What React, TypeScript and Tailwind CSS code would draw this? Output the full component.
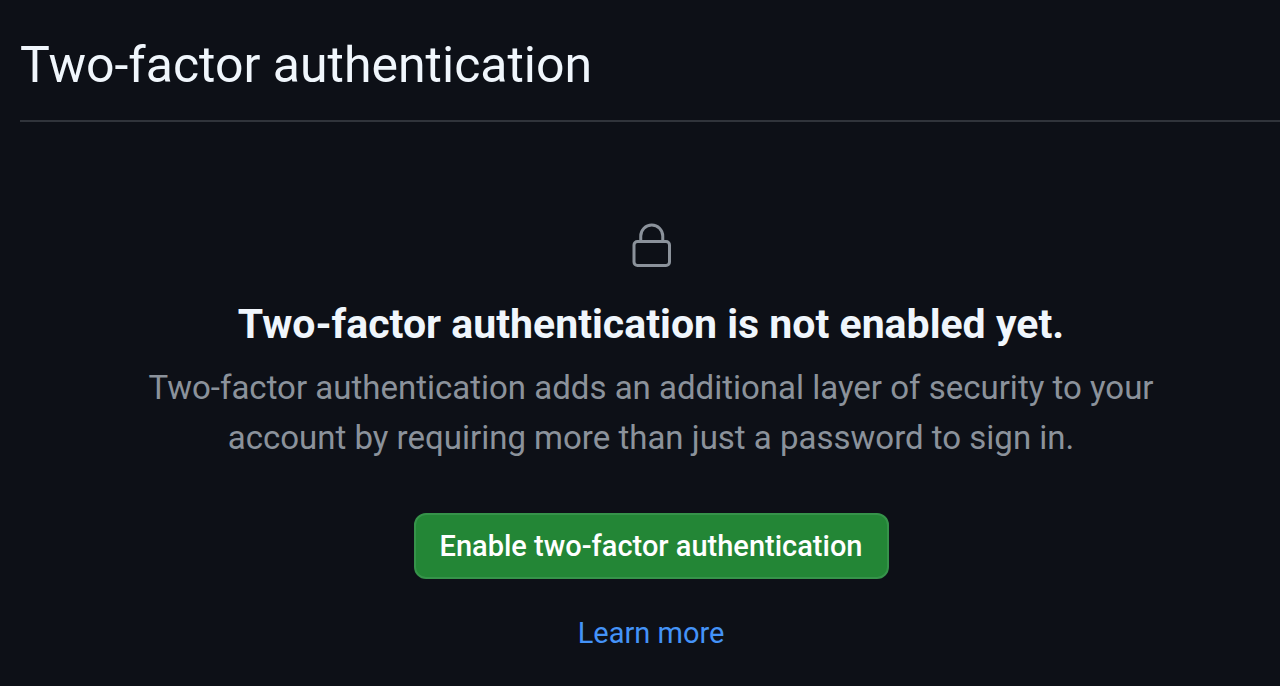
export default function App() {
  return (
    <main className="min-h-screen bg-[#0d1017] pl-5 pt-[33px] font-['Roboto',sans-serif] text-[#f0f6fc]">
      <header className="border-b-2 border-[#30343b] pb-[23px]">
        <h1 className="text-[50px] leading-[64px]">Two-factor authentication</h1>
      </header>
      <section className="flex flex-col items-center pl-0.5 pt-[100px] text-center">
        <svg aria-hidden="true" viewBox="0 0 40 46" className="h-[46px] w-10" fill="none" stroke="#8b929b" strokeWidth="3">
          <rect x="3" y="19.5" width="35.5" height="24" rx="3.5" />
          <path d="M9.75 19.5V14a11 11 0 0 1 22 0v5.5" />
        </svg>
        <h2 className="mt-[29px] text-[41px] font-bold leading-[54px]">Two-factor authentication is not enabled yet.</h2>
        <p className="mt-3 max-w-[1040px] text-[33px] leading-[50px] text-[#8b929b]">
          Two-factor authentication adds an additional layer of security to your account by requiring more than just a password to sign in.
        </p>
        <button type="button" className="mt-[50px] rounded-xl border-2 border-[#36934a] bg-[#238636] px-6 py-2.5 text-[29px] font-medium leading-[42px] text-white">
          Enable two-factor authentication
        </button>
        <a href="#learn-more" className="mt-8 text-[29px] leading-[44px] text-[#4493f8]">Learn more</a>
      </section>
    </main>
  );
}
